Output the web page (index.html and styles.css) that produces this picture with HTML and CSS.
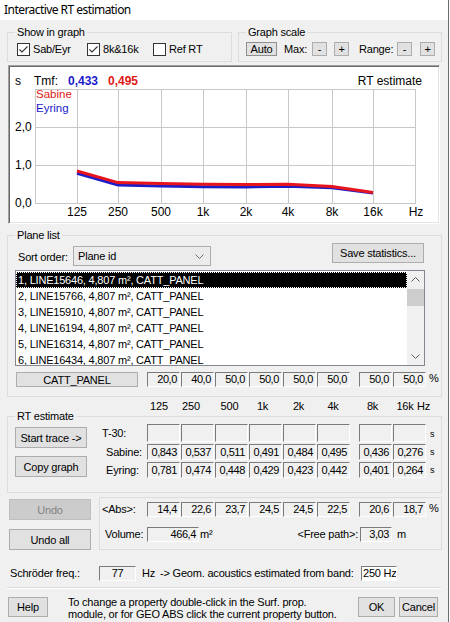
FILE: index.html
```html
<!DOCTYPE html>
<html>
<head>
<meta charset="utf-8">
<title>Interactive RT estimation</title>
<link rel="stylesheet" href="styles.css">
</head>
<body>
<div class="win">
  <div class="title">Interactive RT estimation</div>

  <div class="top-row">
    <fieldset class="grp grp-show">
      <legend>Show in graph</legend>
      <div class="checks">
        <label class="chk w70"><svg class="cb" width="13" height="13" viewBox="0 0 13 13"><rect x="0.5" y="0.5" width="12" height="12" fill="#fff" stroke="#333"/><path d="M2.5 6.5 L5 9 L10.5 3.5" fill="none" stroke="#333" stroke-width="1.1"/></svg>Sab/Eyr</label>
        <label class="chk w66"><svg class="cb" width="13" height="13" viewBox="0 0 13 13"><rect x="0.5" y="0.5" width="12" height="12" fill="#fff" stroke="#333"/><path d="M2.5 6.5 L5 9 L10.5 3.5" fill="none" stroke="#333" stroke-width="1.1"/></svg>8k&amp;16k</label>
        <label class="chk"><svg class="cb" width="13" height="13" viewBox="0 0 13 13"><rect x="0.5" y="0.5" width="12" height="12" fill="#fff" stroke="#333"/></svg>Ref RT</label>
      </div>
    </fieldset>
    <fieldset class="grp grp-scale">
      <legend>Graph scale</legend>
      <div class="scale-row">
        <span class="btn b-auto">Auto</span>
        <span class="lbl-max">Max:</span>
        <span class="btn sq">-</span>
        <span class="btn sq gap7">+</span>
        <span class="lbl-range">Range:</span>
        <span class="btn sq">-</span>
        <span class="btn sq gap8">+</span>
      </div>
    </fieldset>
  </div>

  <div class="graph">
    <svg class="plot" width="430" height="157" viewBox="9 66 430 157">
      <path d="M35.5 89V204 M77.5 89V204 M118.5 89V204 M161.5 89V204 M203.5 89V204 M246.5 89V204 M288.5 89V204 M332.5 89V204 M373.5 89V204 M415.5 89V204 M35 89.5H416 M35 127.5H416 M35 165.5H416 M35 203.5H416" stroke="#c8c8c8" stroke-width="1" fill="none" shape-rendering="crispEdges"/>
      <polyline points="77,173.3 118,185 161,186 203,186.7 246,186.9 288,186.2 332,187.8 373,193" fill="none" stroke="#1e1ec8" stroke-width="3"/>
      <polyline points="77,171 118,182.6 161,183.6 203,184.3 246,184.6 288,184.2 332,186.4 373,192.5" fill="none" stroke="#e8141c" stroke-width="3"/>
      <g class="gtext" font-size="12">
        <text x="15" y="85">s</text>
        <text x="34" y="85">Tmf:</text>
        <text x="68" y="85" font-weight="bold" fill="#1a1acc">0,433</text>
        <text x="108" y="85" font-weight="bold" fill="#e01818">0,495</text>
        <text x="422" y="85" text-anchor="end">RT estimate</text>
        <text x="36" y="98" font-size="11.5" fill="#e01818">Sabine</text>
        <text x="36" y="111.5" font-size="11.5" fill="#1a1acc">Eyring</text>
        <text x="15" y="131">2,0</text>
        <text x="15" y="169">1,0</text>
        <text x="15" y="207">0,0</text>
        <g text-anchor="middle">
          <text x="77" y="216">125</text>
          <text x="118" y="216">250</text>
          <text x="161" y="216">500</text>
          <text x="203" y="216">1k</text>
          <text x="246" y="216">2k</text>
          <text x="288" y="216">4k</text>
          <text x="332" y="216">8k</text>
          <text x="373" y="216">16k</text>
          <text x="416" y="216">Hz</text>
        </g>
      </g>
    </svg>
  </div>

  <fieldset class="grp grp-plane">
    <legend>Plane list</legend>
    <div class="sort-row">
      <span class="sort-lbl">Sort order:</span>
      <div class="combo"><span>Plane id</span><svg width="9" height="5" viewBox="0 0 9 5"><path d="M0.5 0.5 L4.5 4.5 L8.5 0.5" fill="none" stroke="#707070"/></svg></div>
      <span class="btn save">Save statistics...</span>
    </div>
    <div class="listbox">
      <div class="rows">
        <div class="row sel">1, LINE15646, 4,807 m², CATT_PANEL</div>
        <div class="row">2, LINE15766, 4,807 m², CATT_PANEL</div>
        <div class="row">3, LINE15910, 4,807 m², CATT_PANEL</div>
        <div class="row">4, LINE16194, 4,807 m², CATT_PANEL</div>
        <div class="row">5, LINE16314, 4,807 m², CATT_PANEL</div>
        <div class="row">6, LINE16434, 4,807 m², CATT_PANEL</div>
      </div>
      <div class="vscroll">
        <div class="sb-btn"><svg width="9" height="5" viewBox="0 0 9 5"><path d="M0.5 4.5 L4.5 0.5 L8.5 4.5" fill="none" stroke="#606060"/></svg></div>
        <div class="thumb"></div>
        <div class="sb-track"></div>
        <div class="sb-btn"><svg width="9" height="5" viewBox="0 0 9 5"><path d="M0.5 0.5 L4.5 4.5 L8.5 0.5" fill="none" stroke="#606060"/></svg></div>
      </div>
    </div>
    <div class="catt-row">
      <span class="btn catt-btn">CATT_PANEL</span>
      <div class="cols">
        <span class="vbox">20,0</span><span class="vbox">40,0</span><span class="vbox">50,0</span><span class="vbox">50,0</span><span class="vbox">50,0</span><span class="vbox">50,0</span><span></span><span class="vbox">50,0</span><span class="vbox">50,0</span><span class="unit">%</span>
      </div>
    </div>
  </fieldset>

  <div class="cols fhead">
    <span>125</span><span>250</span><span>500</span><span>1k</span><span>2k</span><span>4k</span><span></span><span>8k</span><span>16k</span><span class="fhz">Hz</span>
  </div>

  <fieldset class="grp grp-rt">
    <legend>RT estimate</legend>
    <div class="rt-body">
      <div class="rt-btns">
        <span class="btn">Start trace -&gt;</span>
        <span class="btn">Copy graph</span>
      </div>
      <div class="rt-grid">
        <span class="rlbl t30">T-30:</span>
        <span class="vbox"></span><span class="vbox"></span><span class="vbox"></span><span class="vbox"></span><span class="vbox"></span><span class="vbox"></span><span></span><span class="vbox"></span><span class="vbox"></span><span class="sunit">s</span>
        <span class="rlbl">Sabine:</span>
        <span class="vbox">0,843</span><span class="vbox">0,537</span><span class="vbox">0,511</span><span class="vbox">0,491</span><span class="vbox">0,484</span><span class="vbox">0,495</span><span></span><span class="vbox">0,436</span><span class="vbox">0,276</span><span class="sunit">s</span>
        <span class="rlbl">Eyring:</span>
        <span class="vbox">0,781</span><span class="vbox">0,474</span><span class="vbox">0,448</span><span class="vbox">0,429</span><span class="vbox">0,423</span><span class="vbox">0,442</span><span></span><span class="vbox">0,401</span><span class="vbox">0,264</span><span class="sunit">s</span>
      </div>
    </div>
  </fieldset>

  <div class="undo-row">
    <div class="undo-col">
      <span class="btn disabled">Undo</span>
      <span class="btn">Undo all</span>
    </div>
    <div class="undo-grp">
      <div class="abs-row">
        <span class="abs-lbl">&lt;Abs&gt;:</span>
        <span class="vbox">14,4</span><span class="vbox">22,6</span><span class="vbox">23,7</span><span class="vbox">24,5</span><span class="vbox">24,5</span><span class="vbox">22,5</span><span></span><span class="vbox">20,6</span><span class="vbox">18,7</span><span class="unit">%</span>
      </div>
      <div class="vol-row">
        <span class="vol-lbl">Volume:</span>
        <span class="vbox vol-box">466,4</span>
        <span class="m2">m²</span>
        <span class="fp-lbl">&lt;Free path&gt;:</span>
        <span class="vbox fp-box">3,03</span>
        <span class="m">m</span>
      </div>
    </div>
  </div>

  <div class="sch-row">
    <span class="sch-lbl">Schröder freq.:</span>
    <span class="vbox sch-box">77</span>
    <span class="hz">Hz</span>
    <span class="geom">-&gt; Geom. acoustics estimated from band:</span>
    <span class="band-box">250 Hz</span>
  </div>

  <div class="sep"></div>

  <div class="footer">
    <span class="btn help">Help</span>
    <div class="note">To change a property double-click in the Surf. prop.<br>module, or for GEO ABS click the current property button.</div>
    <span class="btn ok">OK</span>
    <span class="btn cancel">Cancel</span>
  </div>
</div>
</body>
</html>
```

FILE: styles.css
```css
* { box-sizing: border-box; }
html, body { margin: 0; padding: 0; }
body {
  width: 450px;
  height: 622px;
  overflow: hidden;
  background: #ffffff;
  font-family: "Liberation Sans", Arial, sans-serif;
  font-size: 11px;
  letter-spacing: -0.2px;
  color: #000;
}
.win {
  width: 449px;
  height: 622px;
  background: #f0f0f0;
  border-right: 1px solid #6d6d6d;
}
.title {
  height: 20px;
  background: #fff;
  padding-left: 4px;
  font-family: "Noto Sans", sans-serif;
  font-size: 12px;
  line-height: 20px;
  letter-spacing: -0.55px;
}

/* group boxes */
.grp {
  margin: 0;
  padding: 0;
  border: 1px solid #dcdcdc;
  min-width: 0;
}
.grp > legend {
  padding: 0 2px;
  margin-left: 7px;
  line-height: 13px;
}

/* buttons */
.btn {
  display: flex;
  align-items: center;
  justify-content: center;
  background: #e1e1e1;
  border: 1px solid #adadad;
  white-space: nowrap;
  line-height: 12px;
}
.btn.disabled {
  background: #cccccc;
  border-color: #bfbfbf;
  color: #838383;
}

/* value boxes */
.vbox {
  display: block;
  border: 1px solid;
  border-color: #7a7a7a #ffffff #ffffff #7a7a7a;
  background: #f0f0f0;
  text-align: right;
  padding-right: 2px;
  line-height: 13px;
  letter-spacing: -0.4px;
  white-space: nowrap;
}
.cols {
  display: grid;
  grid-template-columns: repeat(6, 33px) 7px 33px 33px 14px;
  column-gap: 1px;
}
.unit { padding-left: 2px; line-height: 13px; }

/* top row */
.top-row { display: flex; margin-top: 6px; }
.grp-show { margin-left: 7px; width: 225px; height: 36px; }
.grp-scale { margin-left: 6px; width: 204px; height: 36px; }
.checks { display: flex; margin-top: 4px; padding-left: 9px; }
.chk { display: flex; align-items: center; height: 13px; line-height: 13px; }
.chk .cb { display: block; margin-right: 3px; flex: none; }
.chk.w70 { width: 70px; }
.chk.w66 { width: 66px; }

.scale-row { display: flex; margin-top: 3px; padding-left: 7px; height: 14px; }
.scale-row .btn { height: 14px; }
.b-auto { width: 31px; border-color: #8f8f8f; }
.lbl-max { margin-left: 7px; width: 28px; line-height: 14px; }
.lbl-range { margin-left: 10px; width: 38px; line-height: 14px; }
.sq { width: 15px; }
.gap7 { margin-left: 7px; }
.gap8 { margin-left: 8px; }

/* graph */
.graph {
  margin: 3px 0 0 8px;
  width: 432px;
  height: 159px;
  background: #fff;
  border: 1px solid;
  border-color: #a0a0a0 #ffffff #ffffff #a0a0a0;
  box-shadow: inset 1px 1px 0 #696969, inset -1px -1px 0 #e3e3e3;
}
.plot { display: block; }
.gtext { font-family: "Liberation Sans", Arial, sans-serif; letter-spacing: 0; }

/* plane list */
.grp-plane { margin: 5px 0 0 7px; width: 435px; height: 168px; }
.sort-row { display: flex; margin-top: 1px; height: 23px; padding-left: 10px; }
.sort-lbl { width: 55px; margin-top: 8px; line-height: 13px; }
.combo {
  width: 138px;
  height: 20px;
  margin-top: 3px;
  background: #ebebeb;
  border: 1px solid #acacac;
  display: flex;
  align-items: center;
  justify-content: space-between;
  padding: 0 6px 0 4px;
}
.combo svg { display: block; }
.save { width: 92px; height: 20px; margin-left: 121px; }

.listbox {
  margin: 4px 0 0 7px;
  width: 410px;
  height: 96px;
  border: 1px solid #828790;
  background: #fff;
  display: flex;
}
.rows { width: 391px; padding-top: 1px; overflow: hidden; }
.row { height: 16px; line-height: 16px; padding-left: 2px; white-space: nowrap; }
.row.sel { background: #000; color: #fff; outline: 1px dotted #fff; outline-offset: -1px; }
.vscroll { width: 17px; background: #f0f0f0; display: flex; flex-direction: column; }
.sb-btn { height: 17px; display: flex; align-items: center; justify-content: center; }
.sb-btn svg { display: block; }
.thumb { height: 17px; margin-top: 1px; background: #cdcdcd; }
.sb-track { flex: 1; }

.catt-row { display: flex; margin-top: 6px; height: 15px; }
.catt-btn { margin-left: 8px; width: 122px; height: 15px; }
.catt-row .cols { margin-left: 9px; }

/* frequency header */
.fhead { margin: 5px 0 0 147px; height: 9px; line-height: 9px; width: 294px; }
.fhead span { text-align: center; white-space: nowrap; }
.fhead span:nth-child(1) { padding-right: 9px; }
.fhead span:nth-child(2) { padding-right: 13px; }
.fhead span:nth-child(3) { padding-right: 4px; }
.fhead span:nth-child(4) { padding-right: 6px; }
.fhead span:nth-child(5) { padding-right: 2px; }
.fhead span:nth-child(6) { padding-right: 1px; }
.fhead span:nth-child(8) { padding-right: 6px; }
.fhead span:nth-child(9) { padding-right: 9px; }
.fhead .fhz { text-align: left; margin-left: -10px; }

/* RT estimate */
.grp-rt { margin: 0 0 0 7px; width: 435px; height: 82px; }
.grp-rt > legend { line-height: 11px; }
.rt-body { display: flex; padding-left: 7px; }
.rt-btns { width: 72px; display: flex; flex-direction: column; }
.rt-btns .btn { height: 21px; }
.rt-btns .btn:first-child { margin-top: 5px; }
.rt-btns .btn + .btn { margin-top: 8px; }
.rt-grid {
  margin: 2px 0 0 15px;
  display: grid;
  grid-template-columns: 44px repeat(6, 33px) 7px 33px 33px 14px;
  grid-template-rows: 18px 16px 16px;
  gap: 2px 1px;
}
.rt-grid .vbox { line-height: 14px; }
.rlbl { padding-left: 4px; line-height: 16px; }
.rlbl.t30 { padding-left: 0; line-height: 18px; }
.sunit { padding-left: 3px; font-size: 9px; line-height: 15px; align-self: end; }

/* undo */
.undo-row { display: flex; margin-top: 4px; }
.undo-col { margin-left: 9px; width: 82px; display: flex; flex-direction: column; }
.undo-col .btn { height: 21px; }
.undo-col .btn:first-child { margin-top: 2px; }
.undo-col .btn + .btn { margin-top: 9px; }
.undo-grp { margin-left: 8px; width: 343px; height: 53px; border: 1px solid #dcdcdc; }
.abs-row {
  display: grid;
  grid-template-columns: 46px repeat(6, 33px) 7px 33px 33px 14px;
  column-gap: 1px;
  margin-top: 4px;
  height: 15px;
}
.abs-lbl { padding-left: 2px; line-height: 15px; }
.vol-row { display: flex; margin-top: 10px; height: 15px; line-height: 15px; }
.vol-lbl { width: 47px; padding-left: 5px; }
.vol-box { width: 52px; height: 15px; }
.m2 { width: 42px; padding-left: 1px; }
.fp-lbl { width: 117px; text-align: right; }
.fp-box { width: 32px; height: 15px; margin-left: 2px; }
.m { padding-left: 5px; }

/* schroder */
.sch-row { display: flex; align-items: center; margin-top: 15px; height: 16px; }
.sch-lbl { margin-left: 10px; width: 89px; white-space: nowrap; }
.sch-box { width: 37px; height: 15px; text-align: center; padding-right: 0; }
.hz { margin-left: 6px; width: 18px; }
.geom { width: 201px; white-space: nowrap; }
.band-box {
  width: 36px;
  height: 15px;
  background: #fff;
  border: 1px solid;
  border-color: #7a7a7a #ffffff #ffffff #7a7a7a;
  padding-left: 1px;
  line-height: 13px;
  white-space: nowrap;
  overflow: hidden;
}

.sep {
  margin: 6px 0 0 7px;
  width: 434px;
  height: 2px;
  border-top: 1px solid #dadada;
  border-bottom: 1px solid #ffffff;
}

.footer { display: flex; align-items: flex-start; margin-top: 8px; }
.help { margin-left: 8px; width: 40px; height: 20px; }
.note { margin-left: 20px; margin-top: -1px; width: 290px; line-height: 12px; white-space: nowrap; }
.ok { width: 37px; height: 20px; }
.cancel { margin-left: 4px; width: 39px; height: 20px; }
```
